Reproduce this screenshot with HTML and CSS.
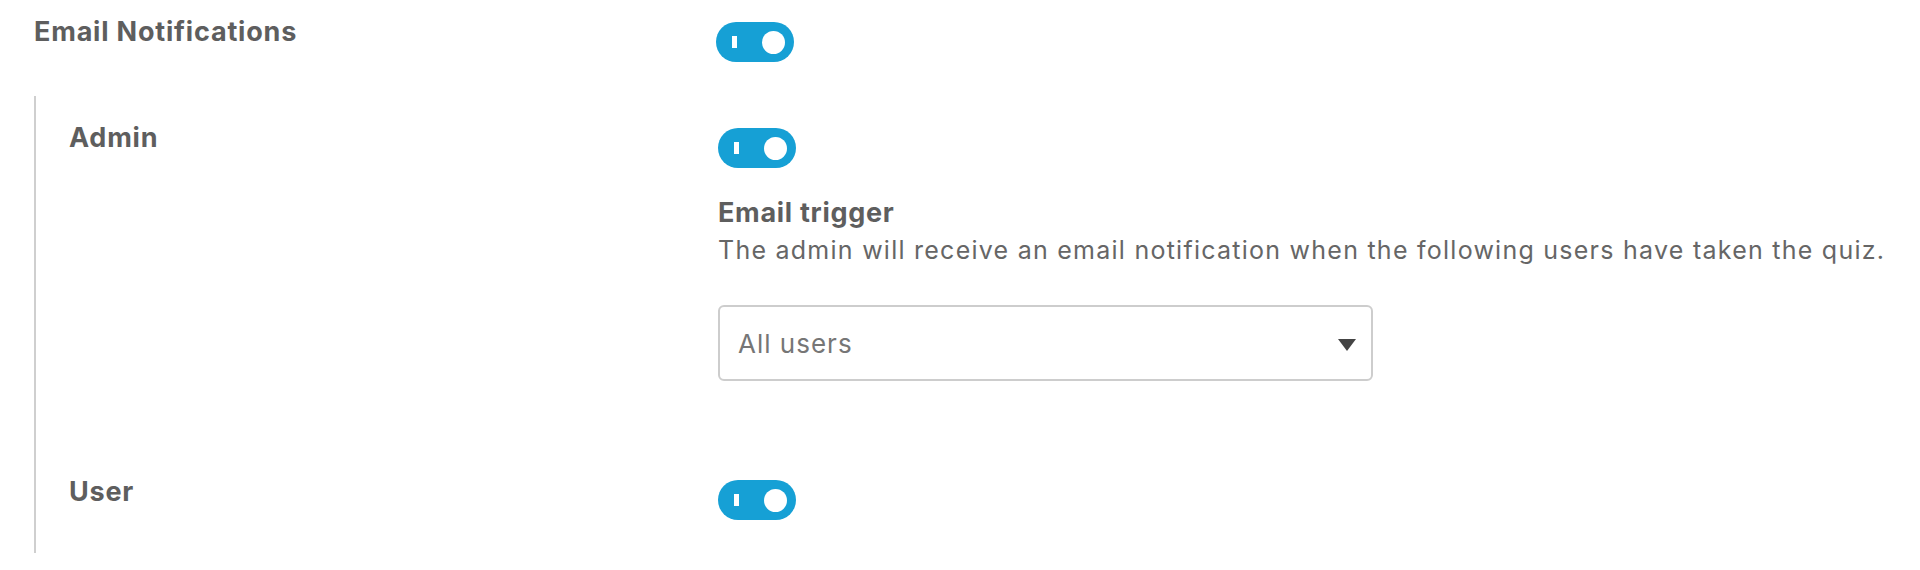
FILE: index.html
```html
<!DOCTYPE html>
<html lang="en">
<head>
<meta charset="utf-8">
<title>Email Notifications</title>
<link rel="stylesheet" href="styles.css">
</head>
<body>
<div class="settings">
  <div class="row row-top">
    <div class="label label-main">Email Notifications</div>
    <div class="control">
      <span class="toggle toggle-main"><span class="toggle-bar"></span><span class="toggle-knob"></span></span>
    </div>
  </div>
  <div class="group">
    <div class="row row-admin">
      <div class="label label-sub">Admin</div>
      <div class="control">
        <span class="toggle"><span class="toggle-bar"></span><span class="toggle-knob"></span></span>
        <div class="field">
          <div class="field-title">Email trigger</div>
          <div class="field-desc">The admin will receive an email notification when the following users have taken the quiz.</div>
          <div class="select">
            <span class="select-value">All users</span>
            <svg class="select-arrow" width="18" height="12" viewBox="0 0 18 12"><path d="M0 0 H18 L9 12 Z" fill="#444"/></svg>
          </div>
        </div>
      </div>
    </div>
    <div class="row row-user">
      <div class="label label-sub">User</div>
      <div class="control">
        <span class="toggle"><span class="toggle-bar"></span><span class="toggle-knob"></span></span>
      </div>
    </div>
  </div>
</div>
</body>
</html>
```

FILE: styles.css
```css
* { box-sizing: border-box; }
html, body { margin: 0; padding: 0; background: #fff; }
body {
  font-family: Inter, "Noto Sans", "Liberation Sans", sans-serif;
  color: #5e5e5e;
}
.settings { padding-left: 34px; }
.row { display: flex; align-items: flex-start; }
.label {
  font-size: 27px;
  font-weight: 700;
  line-height: 32px;
  letter-spacing: 0.8px;
  color: #5e5e5e;
  flex: none;
}
.row-top { padding-top: 16px; }
.label-main { width: 682px; }
.label-sub { width: 649px; }
.control { display: flex; flex-direction: column; align-items: flex-start; }
.toggle {
  display: flex;
  align-items: center;
  justify-content: space-between;
  width: 78px;
  height: 40px;
  border-radius: 20px;
  background: #16a0d5;
  padding: 0 9px 0 16px;
  margin-top: 6px;
}
.toggle-bar { width: 5px; height: 12px; background: #fff; }
.toggle-knob { width: 23px; height: 23px; border-radius: 50%; background: #fff; }
.group {
  margin-top: 34px;
  border-left: 2px solid #cfcfcf;
  padding-left: 33px;
  padding-bottom: 33px;
}
.row-admin { padding-top: 26px; }
.field { margin-top: 29px; }
.field-title {
  font-size: 27px;
  font-weight: 700;
  line-height: 32px;
  letter-spacing: 0.7px;
  color: #5e5e5e;
}
.field-desc {
  margin-top: 5px;
  font-size: 25px;
  line-height: 32px;
  letter-spacing: 1.25px;
  color: #666;
}
.select {
  margin-top: 39px;
  width: 655px;
  height: 76px;
  border: 2px solid #cdcdcd;
  border-radius: 6px;
  display: flex;
  align-items: center;
  justify-content: space-between;
  padding: 0 15px 0 18px;
}
.select-value { font-size: 26px; letter-spacing: 1px; color: #767676; }
.select-arrow { display: block; margin-top: 3px; }
.row-user { padding-top: 95px; }
.row-user .toggle { margin-top: 4px; }
```
